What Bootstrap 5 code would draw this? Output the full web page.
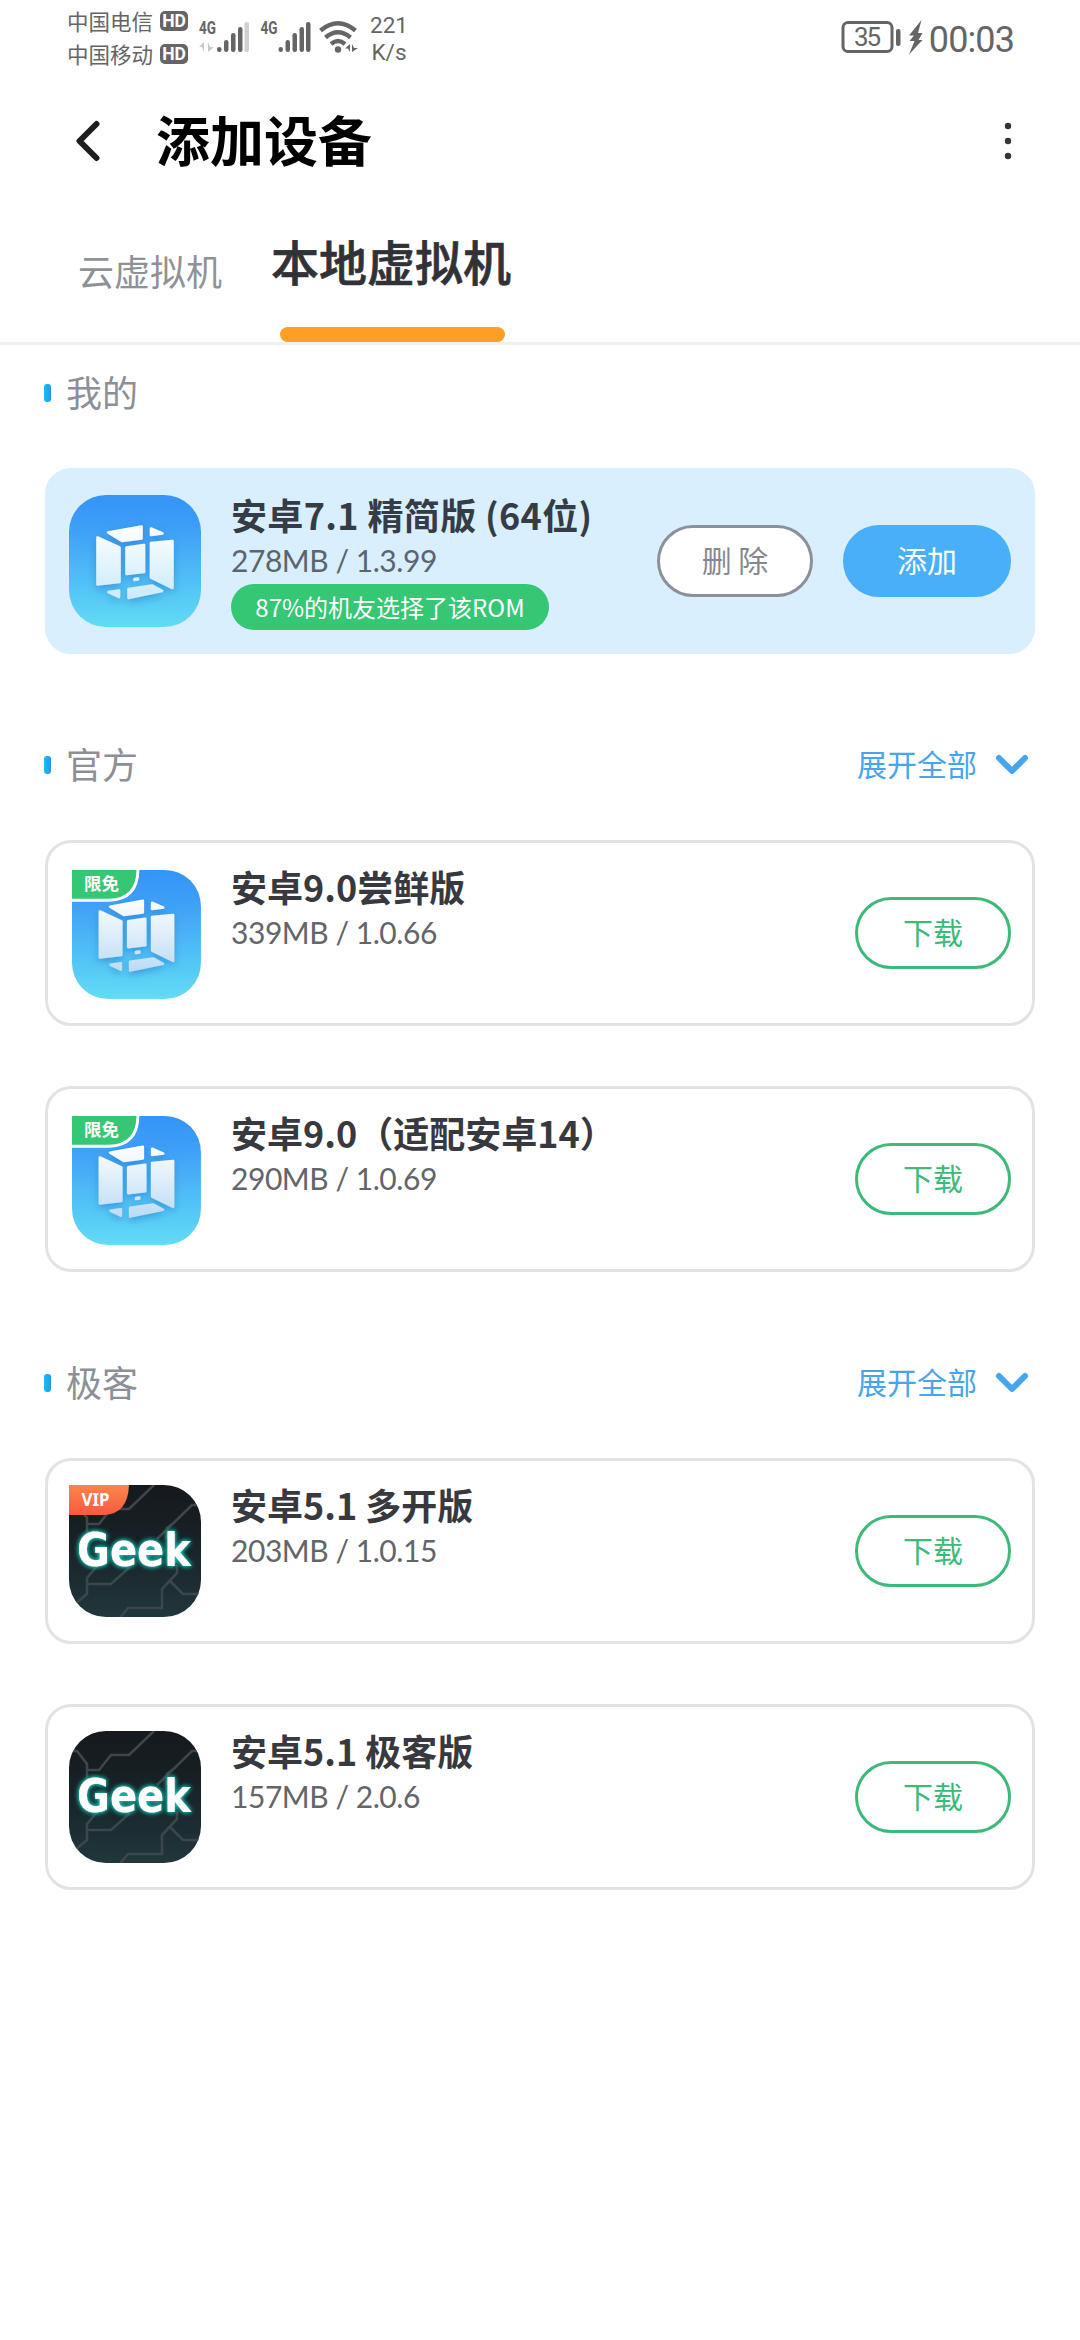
<!DOCTYPE html>
<html lang="zh-CN">
<head>
<meta charset="utf-8">
<meta name="viewport" content="width=device-width, initial-scale=1">
<title>添加设备</title>
<link rel="stylesheet" href="https://cdn.jsdelivr.net/npm/bootstrap@5.3.0/dist/css/bootstrap.min.css">
<style>
body{font-family:"Noto Sans CJK SC",sans-serif;background:#fff;color:#37393f;font-size:30px;line-height:1;min-height:2340px;overflow-x:hidden}
svg{display:block;flex:none}
.status{height:75px;padding:4px 66px 0 67px;color:#656565}
.carrier{font-size:21.5px;line-height:33px;font-weight:400;white-space:nowrap}
.hd{width:28px;height:20px;border-radius:5px;background:#656565;color:#fff;font:bold 17.5px/20px Roboto,sans-serif;text-align:center;margin-left:7px}
.speed{font:400 22.5px/27px Roboto,sans-serif;width:38px;margin-left:7px;padding-top:8px;text-align:center}
.net-icons{margin:16px 0 0 11px}
.clock{font:400 36px/40px Roboto,"Noto Sans CJK SC",sans-serif;letter-spacing:-.9px;margin:16px 0 0 4px}
.appbar{height:134px;padding:0 66px 0 75px}
.page-title{font-size:54px;font-weight:700;line-height:60px;color:#000;margin:-6px 0 0 55px}
.tabs{height:136px;border-bottom:3px solid #f0f0f2;padding-left:78px}
.tab-off{font-size:36px;line-height:40px;color:#8e9297;margin:41px 49px 0 0}
.tab-on{font-size:48px;line-height:52px;font-weight:500;color:#313238;margin-top:25px;-webkit-text-stroke:.7px #313238}
.tab-line{width:225px;height:15px;border-radius:8px;background:#ff9e24;margin:41px 0 0 9px}
.sect{height:40px;padding:0 51px 0 44px}
.sect h2{font-size:36px;line-height:40px;font-weight:400;color:#8c9096;margin:-5px 0 0 15px}
.tick{width:7px;height:18px;border-radius:3px;background:linear-gradient(90deg,#16c1f2,#2697e6)}
.more{color:#46a5ec;gap:18px;line-height:36px}
.more span{margin-top:-4px}
.rom{width:990px;height:186px;margin:0 45px;padding:24px 21px;border:3px solid #e3e3e3;border-radius:26px}
.rom.mine{background:#d9effe;border-color:#d9effe}
.info{margin:-2px 0 0 30px}
.rom-name{font-size:36px;line-height:42px;font-weight:700;white-space:nowrap;margin-bottom:6px}
.rom-meta{font:400 30px/38px Lato,sans-serif;letter-spacing:-.45px;color:#63656a;white-space:nowrap}
.mine .rom-name{color:#353c46;letter-spacing:.35px}
.mine .rom-meta{color:#596571}
.pill{width:318px;height:46px;border-radius:23px;background:#35c774;color:#fff;font-size:24px;line-height:45px;margin-top:5px;text-align:center;white-space:nowrap}
.act{width:156px;height:72px;border:3px solid #3db979;border-radius:36px!important;background:#fff;color:#3db979;font-size:30px;line-height:30px;padding:0 0 4px;margin-top:30px;flex:none}
.act-del{border-color:#8c9199;color:#85898e}
.act-add{width:168px;border-color:#49aff8;background:#49aff8;color:#fff;margin-left:30px}
.first{margin-top:28px}.next-sect{margin-top:91px}.lead-rom{margin-top:55px}.next-rom{margin-top:60px}
</style>
<script src="https://cdn.jsdelivr.net/npm/bootstrap@5.3.0/dist/js/bootstrap.bundle.min.js"></script>
</head>
<body>
<svg width="0" height="0" class="position-absolute" aria-hidden="true">
<defs>
<linearGradient id="sky" x1="0" y1="0" x2="0" y2="1"><stop offset="0" stop-color="#3494f8"/><stop offset=".25" stop-color="#3e9ff7"/><stop offset="1" stop-color="#62dcf5"/></linearGradient>
<linearGradient id="glass" gradientUnits="userSpaceOnUse" x1="0" y1="30" x2="0" y2="106"><stop offset="0" stop-color="#fff"/><stop offset="1" stop-color="#c8eafb"/></linearGradient>
<linearGradient id="frost" gradientUnits="userSpaceOnUse" x1="0" y1="30" x2="0" y2="106"><stop offset="0" stop-color="#fff"/><stop offset="1" stop-color="#b9daf5"/></linearGradient>
<linearGradient id="night" x1="0" y1="0" x2="0" y2="1"><stop offset="0" stop-color="#15191d"/><stop offset=".45" stop-color="#182227"/><stop offset="1" stop-color="#20373c"/></linearGradient>
<linearGradient id="flame" x1="0" y1="0" x2="0" y2="1"><stop offset="0" stop-color="#fb8748"/><stop offset="1" stop-color="#fb5843"/></linearGradient>
<filter id="soft" x="-30%" y="-30%" width="160%" height="160%"><feDropShadow dx="0" dy="3" stdDeviation="4" flood-color="#1d6fc4" flood-opacity=".5"/></filter>
<filter id="glow" x="-20%" y="-40%" width="140%" height="180%"><feGaussianBlur in="SourceAlpha" stdDeviation="2.6" result="b"/><feFlood flood-color="#14c8b8"/><feComposite in2="b" operator="in" result="c"/><feMerge><feMergeNode in="c"/><feMergeNode in="c"/><feMergeNode in="SourceGraphic"/></feMerge></filter>
<clipPath id="round"><rect width="132" height="132" rx="37"/></clipPath>
<clipPath id="flagged"><path d="M0 0H95A37 37 0 0 1 132 37V95A37 37 0 0 1 95 132H37A37 37 0 0 1 0 95Z"/></clipPath>
<g id="cube" stroke-width="2.600" stroke-linejoin="round" filter="url(#soft)">
<path d="M39 37.500 72.500 31.500V43.500L53 46Z"/><path d="M82 33.500 93.500 38.500 82 40Z"/>
<path d="M28.500 42.500 50.500 52.500V87L28.500 89.500Z"/><path d="M57.500 52.500 75 50V77L57.500 79Z"/>
<path d="M82 48 103.500 46V93L82 82.500Z"/><path d="M65.500 84 69 83.500V84.500L65.500 85Z"/>
<path d="M39.500 97 50 95.500V102Z"/><path d="M59.500 94 83 90.500 93 96 59.500 103Z"/></g>
<g id="geek"><rect width="132" height="132" fill="url(#night)"/>
<g fill="none" stroke="#3b474b" stroke-width="2.600"><path d="M3 20H8L18 33V39H30L42 24H60L85 0M18 39V53"/><path d="M132 20H123L88 54M28 81 18 93V109L6 119M18 99H42L61 82M108 80V88L93 104V123H59L50 134M101 96 114 109H130M98 54V43L107 36"/></g>
<g filter="url(#glow)"><text x="8" y="81" textLength="114" lengthAdjust="spacingAndGlyphs" font-family="DejaVu Sans, sans-serif" font-weight="700" font-size="46" fill="#fff">Geek</text></g></g>
<g id="sig" fill="#656565"><text x="0" y="14" font-family="Roboto" font-weight="700" font-size="18" textLength="17" lengthAdjust="spacingAndGlyphs">4G</text><rect x="18" y="27" width="4.500" height="5" rx="2.200"/><rect x="25" y="20" width="4.500" height="12" rx="2.200"/><rect x="32" y="13" width="4.500" height="19" rx="2.200"/><rect x="39" y="7" width="4.500" height="25" rx="2.200"/></g>
</defs>
</svg>

<header class="status d-flex">
  <div>
    <div class="d-flex align-items-center carrier"><span>中国电信</span><span class="hd">HD</span></div>
    <div class="d-flex align-items-center carrier"><span>中国移动</span><span class="hd">HD</span></div>
  </div>
  <svg class="net-icons" width="164" height="42" viewBox="0 0 164 42">
    <use href="#sig"/><rect x="45.500" y="2" width="4.500" height="30" rx="2" fill="#d0d0d0"/>
    <path d="M5 32V22L0 27H3M9 22V32L15 27H11" fill="#c8c8c8"/>
    <use href="#sig" x="61.500"/><rect x="107" y="2" width="4.500" height="30" rx="2.200" fill="#656565"/>
    <g fill="none" stroke="#656565" stroke-width="4.400"><path d="M121.500 10.500Q139 -4 156.500 10.500"/><path d="M126.500 17.500Q139 7 151.500 17.500"/><path d="M132 24Q139 18 146 24"/></g>
    <circle cx="139" cy="29.500" r="3.200" fill="#656565"/><path d="M151 32V24L146 28.500H149M153 24V32L159 28H155" fill="#656565"/>
  </svg>
  <div class="speed">221<br>K/s</div>
  <div class="d-flex align-items-start ms-auto">
    <svg width="84" height="40" viewBox="0 0 84 40" style="margin-top:14px">
      <rect x="2" y="4.500" width="49" height="29" rx="5" fill="none" stroke="#656565" stroke-width="3"/>
      <text x="26.500" y="28" text-anchor="middle" font-family="Roboto" font-size="26" fill="#656565" textLength="27">35</text>
      <rect x="55" y="11" width="4.500" height="17" rx="2" fill="#656565"/><path d="M80.500 2 68 17.500H73L68.500 23H73.500L68 36.500 81.500 22H77.500L81.500 15H77Z" fill="#656565"/>
    </svg>
    <div class="clock">00:03</div>
  </div>
</header>

<nav class="appbar d-flex align-items-center">
  <svg width="26" height="44" viewBox="0 0 26 44"><path d="M21.500 4 4.500 21 21.500 38" fill="none" stroke="#1d1d1f" stroke-width="6" stroke-linecap="round" stroke-linejoin="round"/></svg>
  <h1 class="page-title">添加设备</h1>
  <svg class="ms-auto" width="12" height="40" viewBox="0 0 12 40" fill="#343434"><circle cx="6" cy="4" r="3.200"/><circle cx="6" cy="19" r="3.200"/><circle cx="6" cy="34" r="3.200"/></svg>
</nav>

<div class="tabs d-flex">
  <div class="tab-off">云虚拟机</div>
  <div><div class="tab-on">本地虚拟机</div><div class="tab-line"></div></div>
</div>

<main>
  <div class="sect first d-flex align-items-center"><i class="tick"></i><h2>我的</h2></div>
  <article class="rom mine lead-rom d-flex">
    <svg width="132" height="132" viewBox="0 0 132 132"><rect width="132" height="132" rx="37" fill="url(#sky)"/><use href="#cube" fill="url(#glass)" stroke="url(#glass)"/></svg>
    <div class="info"><div class="rom-name">安卓7.1 精简版 (64位)</div><div class="rom-meta">278MB / 1.3.99</div><div class="pill">87%的机友选择了该ROM</div></div>
    <button class="btn act act-del ms-auto">删 除</button><button class="btn act act-add">添加</button>
  </article>

  <div class="sect next-sect d-flex align-items-center"><i class="tick"></i><h2>官方</h2>
    <div class="more d-flex align-items-center ms-auto"><span>展开全部</span><svg width="34" height="24" viewBox="0 0 34 24"><path d="M4 5 17 18 30 5" fill="none" stroke="#46a5ec" stroke-width="6" stroke-linecap="round" stroke-linejoin="round"/></svg></div></div>
  <article class="rom lead-rom d-flex">
    <svg width="132" height="132" viewBox="0 0 132 132"><g transform="translate(3 3) scale(.977)"><g clip-path="url(#flagged)"><rect width="132" height="132" fill="url(#sky)"/><use href="#cube" fill="url(#frost)" stroke="url(#frost)"/><path d="M-3 -3H67.500V-1Q67.500 30 38 31H-3Z" fill="#35c774" stroke="#fff" stroke-width="3"/></g></g><text x="32.500" y="23" text-anchor="middle" font-size="17.500" font-weight="700" fill="#fff">限免</text></svg>
    <div class="info"><div class="rom-name">安卓9.0尝鲜版</div><div class="rom-meta">339MB / 1.0.66</div></div>
    <button class="btn act ms-auto">下载</button>
  </article>
  <article class="rom next-rom d-flex">
    <svg width="132" height="132" viewBox="0 0 132 132"><g transform="translate(3 3) scale(.977)"><g clip-path="url(#flagged)"><rect width="132" height="132" fill="url(#sky)"/><use href="#cube" fill="url(#frost)" stroke="url(#frost)"/><path d="M-3 -3H67.500V-1Q67.500 30 38 31H-3Z" fill="#35c774" stroke="#fff" stroke-width="3"/></g></g><text x="32.500" y="23" text-anchor="middle" font-size="17.500" font-weight="700" fill="#fff">限免</text></svg>
    <div class="info"><div class="rom-name">安卓9.0（适配安卓14）</div><div class="rom-meta">290MB / 1.0.69</div></div>
    <button class="btn act ms-auto">下载</button>
  </article>

  <div class="sect next-sect d-flex align-items-center"><i class="tick"></i><h2>极客</h2>
    <div class="more d-flex align-items-center ms-auto"><span>展开全部</span><svg width="34" height="24" viewBox="0 0 34 24"><path d="M4 5 17 18 30 5" fill="none" stroke="#46a5ec" stroke-width="6" stroke-linecap="round" stroke-linejoin="round"/></svg></div></div>
  <article class="rom lead-rom d-flex">
    <svg width="132" height="132" viewBox="0 0 132 132"><g clip-path="url(#flagged)"><use href="#geek"/><path d="M0 0H60Q59 29 35 30H0Z" fill="url(#flame)"/></g><text x="26.500" y="21" text-anchor="middle" font-family="Noto Sans" font-size="17.500" font-weight="700" fill="#fff" textLength="28" lengthAdjust="spacingAndGlyphs">VIP</text></svg>
    <div class="info"><div class="rom-name">安卓5.1 多开版</div><div class="rom-meta">203MB / 1.0.15</div></div>
    <button class="btn act ms-auto">下载</button>
  </article>
  <article class="rom next-rom d-flex">
    <svg width="132" height="132" viewBox="0 0 132 132"><g clip-path="url(#round)"><use href="#geek"/></g></svg>
    <div class="info"><div class="rom-name">安卓5.1 极客版</div><div class="rom-meta">157MB / 2.0.6</div></div>
    <button class="btn act ms-auto">下载</button>
  </article>
</main>
</body>
</html>
